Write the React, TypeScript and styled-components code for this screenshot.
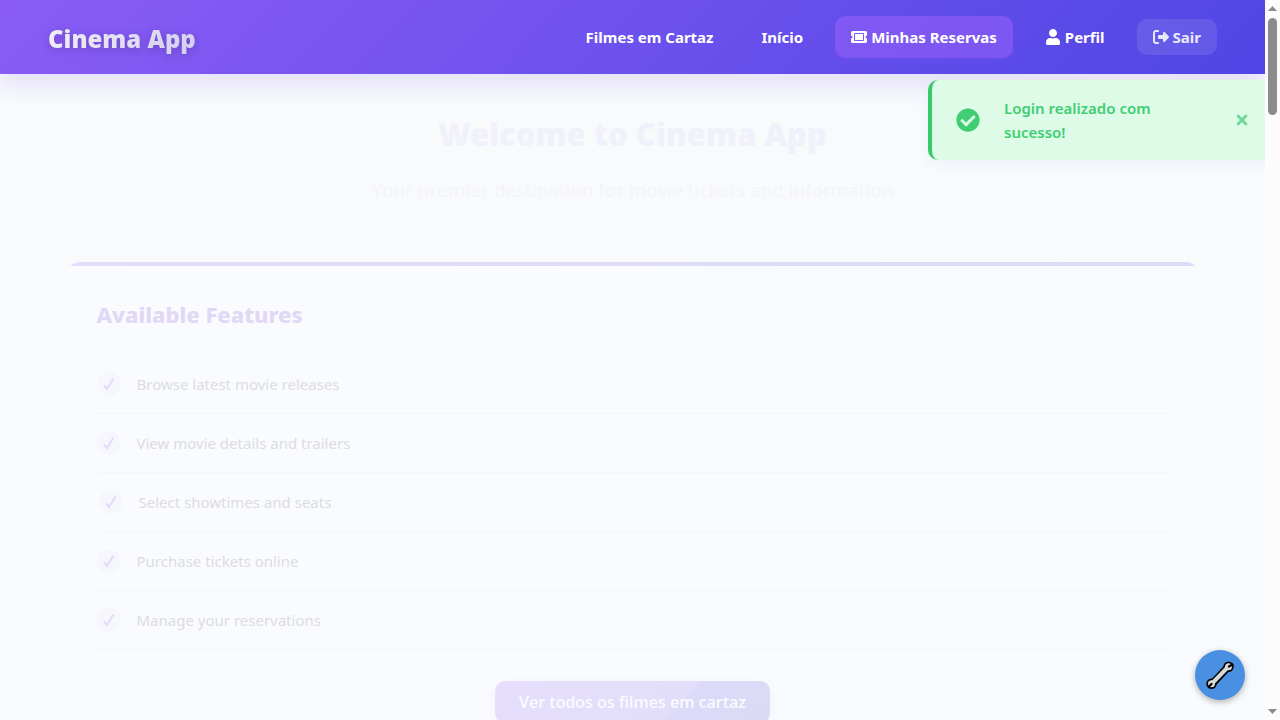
import React from "react";
import styled, { createGlobalStyle, css } from "styled-components";
import { FaUser, FaTimes, FaCheckCircle } from "react-icons/fa";
import { FaRightFromBracket } from "react-icons/fa6";

const GlobalStyle = createGlobalStyle`
  * { box-sizing: border-box; }
  body {
    margin: 0;
    background: #f8fafc;
    font-family: "Noto Sans", "Open Sans", sans-serif;
    font-size: 15px;
    line-height: 24px;
    overflow: hidden;
  }
`;

const Shell = styled.div`
  display: grid;
  grid-template-columns: minmax(0, 1fr) 15px;
  height: 100vh;
`;

const Viewport = styled.div`
  position: relative;
  overflow: hidden;
`;

const ScrollTrack = styled.div`
  display: flex;
  flex-direction: column;
  align-items: center;
  justify-content: space-between;
  padding: 6px 0;
  background: #fcfcfc;
`;

const ScrollTop = styled.div`
  display: flex;
  flex-direction: column;
  align-items: center;
  gap: 7px;
`;

const ScrollThumb = styled.div`
  width: 9px;
  height: 97px;
  border-radius: 5px;
  background: #8b8b8b;
`;

const Arrow = styled.svg`
  display: block;
  width: 9px;
  height: 5px;
  fill: #8b8b8b;
`;

const Header = styled.header`
  position: relative;
  z-index: 1;
  display: flex;
  align-items: center;
  justify-content: space-between;
  padding: 16px 48px;
  background: linear-gradient(135deg, #8b5cf6, #4f46e5);
  box-shadow: 0 10px 25px rgba(109, 70, 229, 0.15);
`;

const Logo = styled.a`
  padding-top: 3px;
  font-size: 24px;
  line-height: 32px;
  font-weight: 900;
  text-decoration: none;
  color: transparent;
  background: linear-gradient(135deg, #f3f3f3, #d3cdf0);
  background-clip: text;
  -webkit-background-clip: text;
  filter: drop-shadow(0 2px 4px rgba(0, 0, 0, 0.2));
`;

const Nav = styled.nav`
  display: flex;
  align-items: center;
  gap: 16px;
`;

const navItem = css`
  display: flex;
  align-items: center;
  gap: 4px;
  padding: 9px 16px;
  border-radius: 10px;
  color: #fff;
  font-family: inherit;
  font-size: 15px;
  font-weight: 700;
  text-decoration: none;
  white-space: nowrap;
`;

const NavLink = styled.a<{ $active?: boolean }>`
  ${navItem}
  ${(p) =>
    p.$active &&
    css`
      background: rgba(139, 92, 246, 0.7);
      box-shadow: 0 4px 10px rgba(139, 92, 246, 0.15);
    `}
`;

const LogoutButton = styled.button`
  ${navItem}
  padding: 6px 16px;
  border: 0;
  background: rgba(255, 255, 255, 0.1);
  color: #eae8fc;
  line-height: inherit;
`;

const NavIcon = styled.svg`
  width: 16px;
  height: 16px;
  fill: currentColor;
`;

const Main = styled.main`
  max-width: 1200px;
  margin: 0 auto;
  padding: 32px;
`;

const Hero = styled.section`
  display: flex;
  flex-direction: column;
  align-items: center;
  gap: 20px;
  padding: 4px 0 60px;
  text-align: center;
`;

const Title = styled.h1`
  margin: 0;
  font-size: 31px;
  line-height: 48px;
  font-weight: 900;
  color: #f1f1fb;
`;

const Lead = styled.p`
  margin: 0;
  font-family: "Open Sans", "Noto Sans", sans-serif;
  font-size: 19px;
  line-height: 24px;
  color: #f4f5f7;
`;

const Card = styled.section`
  padding: 32px;
  border-radius: 16px;
  background: linear-gradient(90deg, #e3dcfb, #dcdaf9) top / 100% 4px no-repeat, #fafbfe;
  box-shadow: 0 4px 16px rgba(79, 70, 229, 0.01);
`;

const CardTitle = styled.h2`
  margin: 0 0 21px;
  font-size: 22px;
  line-height: 40px;
  font-weight: 800;
  color: #e1d8f7;
`;

const FeatureList = styled.ul`
  margin: 0 0 31px;
  padding: 0;
  list-style: none;
`;

const Feature = styled.li<{ $hovered?: boolean }>`
  display: flex;
  align-items: center;
  gap: 16px;
  padding: 17px 0;
  padding-left: ${(p) => (p.$hovered ? 2 : 0)}px;
  border-bottom: 1px solid #f5f6f9;
  color: #dcdde1;
`;

const Tick = styled.span`
  display: grid;
  place-items: center;
  width: 24px;
  height: 24px;
  border-radius: 50%;
  background: #f6f6fd;
`;

const CtaRow = styled.div`
  display: flex;
  justify-content: center;
`;

const Cta = styled.a`
  padding: 9px 24px;
  border-radius: 10px;
  background: linear-gradient(135deg, #e6defc, #e2defa 65%, #dcdaf8 65%, #dadaf6);
  box-shadow: 0 4px 14px rgba(79, 70, 229, 0.04);
  color: #fafaff;
  font-family: "Open Sans", "Noto Sans", sans-serif;
  font-size: 16px;
  font-weight: 600;
  text-decoration: none;
`;

const Toast = styled.div`
  position: absolute;
  z-index: 2;
  top: 80px;
  right: -15px;
  display: flex;
  align-items: center;
  width: 352px;
  padding: 16px 24px;
  border-left: 4px solid #38c96b;
  border-radius: 10px;
  background: #defbe8;
  box-shadow: 0 4px 14px rgba(79, 70, 229, 0.05);
  color: #41ce73;
  font-weight: 600;
`;

const ToastText = styled.p`
  flex: 1;
  margin: 0 56px 0 24px;
`;

const CloseButton = styled.button`
  display: grid;
  place-items: center;
  width: 28px;
  height: 28px;
  padding: 0;
  border: 0;
  background: none;
  color: #6ddb95;
`;

const ToolButton = styled.button`
  position: absolute;
  z-index: 2;
  right: 20px;
  bottom: 20px;
  display: grid;
  place-items: center;
  width: 50px;
  height: 50px;
  padding: 0;
  border: 0;
  border-radius: 50%;
  background: #4a90e2;
  box-shadow: 0 2px 6px rgba(0, 0, 0, 0.3);
`;

const features = [
  "Browse latest movie releases",
  "View movie details and trailers",
  "Select showtimes and seats",
  "Purchase tickets online",
  "Manage your reservations",
];

const TicketIcon = () => (
  <NavIcon viewBox="0 0 16 16" aria-hidden="true">
    <path
      fillRule="evenodd"
      d="M1.500 2h13A1.500 1.500 0 0 1 16 3.500V6.500a1.500 1.500 0 0 0 0 3v3a1.500 1.500 0 0 1-1.500 1.500h-13A1.500 1.500 0 0 1 0 12.500V9.500a1.500 1.500 0 0 0 0-3V3.500A1.500 1.500 0 0 1 1.500 2ZM4 4a1 1 0 0 0-1 1v6a1 1 0 0 0 1 1h8a1 1 0 0 0 1-1V5a1 1 0 0 0-1-1Z"
    />
    <rect x="4" y="5" width="8" height="6" />
  </NavIcon>
);

const WrenchIcon = () => (
  <svg width="28" height="28" viewBox="0 0 28 28" aria-hidden="true">
    <g stroke="#000" fill="#000" strokeWidth="7.500">
      <path d="M6.500 22.500 21.500 6.500" />
      <circle cx="22.500" cy="5.800" r="5.200" stroke="none" />
      <circle cx="5.500" cy="22.800" r="5.200" stroke="none" />
    </g>
    <g stroke="#d9d9d9" fill="#d9d9d9" strokeWidth="4">
      <path d="M6.500 22 21.500 6.500" />
      <circle cx="22.500" cy="5.800" r="3.500" stroke="none" />
      <circle cx="5.500" cy="22.800" r="3.500" stroke="none" />
    </g>
    <path d="M23 5.500 26.500 3.500M5.500 23 3 25.500" stroke="#000" strokeWidth="2.200" strokeLinecap="round" />
  </svg>
);

export default function App() {
  return (
    <>
      <GlobalStyle />
      <Shell>
        <Viewport>
          <Header>
            <Logo href="#">Cinema App</Logo>
            <Nav>
              <NavLink href="#filmes">Filmes em Cartaz</NavLink>
              <NavLink href="#inicio">Início</NavLink>
              <NavLink href="#reservas" $active>
                <TicketIcon />
                Minhas Reservas
              </NavLink>
              <NavLink href="#perfil">
                <FaUser size={16} />
                Perfil
              </NavLink>
              <LogoutButton type="button">
                <FaRightFromBracket size={16} />
                Sair
              </LogoutButton>
            </Nav>
          </Header>
          <Main>
            <Hero>
              <Title>Welcome to Cinema App</Title>
              <Lead>Your premier destination for movie tickets and information</Lead>
            </Hero>
            <Card>
              <CardTitle>Available Features</CardTitle>
              <FeatureList>
                {features.map((label, i) => (
                  <Feature key={label} $hovered={i === 2}>
                    <Tick>
                      <svg width="12" height="14" viewBox="0 0 12 14" aria-hidden="true">
                        <path d="M1 8.500 4 12 10.500 1.500" fill="none" stroke="#e3dbfb" strokeWidth="2" />
                      </svg>
                    </Tick>
                    {label}
                  </Feature>
                ))}
              </FeatureList>
              <CtaRow>
                <Cta href="#filmes">Ver todos os filmes em cartaz</Cta>
              </CtaRow>
            </Card>
          </Main>
          <Toast role="status">
            <FaCheckCircle size={24} />
            <ToastText>Login realizado com sucesso!</ToastText>
            <CloseButton type="button" aria-label="Fechar">
              <FaTimes size={16} />
            </CloseButton>
          </Toast>
          <ToolButton type="button" aria-label="Ferramentas">
            <WrenchIcon />
          </ToolButton>
        </Viewport>
        <ScrollTrack aria-hidden="true">
          <ScrollTop>
            <Arrow viewBox="0 0 9 5">
              <path d="M0 5 4.500 0 9 5Z" />
            </Arrow>
            <ScrollThumb />
          </ScrollTop>
          <Arrow viewBox="0 0 9 5">
            <path d="M0 0 4.500 5 9 0Z" />
          </Arrow>
        </ScrollTrack>
      </Shell>
    </>
  );
}
